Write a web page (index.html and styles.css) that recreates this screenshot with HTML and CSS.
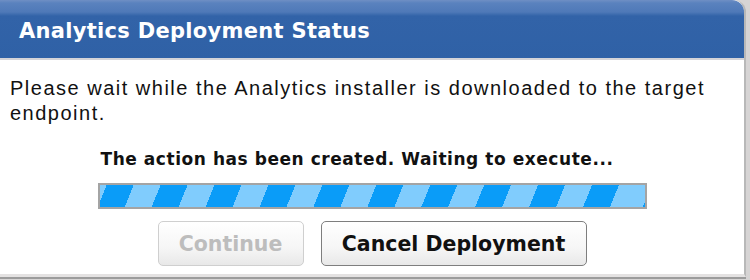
FILE: index.html
```html
<!DOCTYPE html>
<html lang="en">
<head>
    <meta charset="UTF-8">
    <title>Analytics Deployment Status</title>
    <link rel="stylesheet" href="styles.css">
</head>
<body>
    <div class="dialog">
        <div class="dialog-header">
            <h3 class="dialog-title">Analytics Deployment Status</h3>
        </div>
        <div class="dialog-body">
            <p class="message">Please wait while the Analytics installer is downloaded to the target endpoint.</p>
            <div class="status">The action has been created. Waiting to execute...</div>
            <div class="progress"><div class="progress-fill"></div></div>
            <div class="buttons">
                <button class="btn btn-continue" disabled>Continue</button>
                <button class="btn btn-cancel">Cancel Deployment</button>
            </div>
        </div>
    </div>
</body>
</html>
```

FILE: styles.css
```css
html, body {
    margin: 0;
    padding: 0;
}
body {
    background: #d6d4d4;
    width: 750px;
    height: 280px;
    overflow: hidden;
}
.dialog {
    width: 746px;
    height: 277px;
    background: #fff;
    border-right: 2px solid #b8b8b8;
    border-top-right-radius: 12px;
    box-sizing: border-box;
    display: flex;
    flex-direction: column;
    border-bottom: 3px solid #e4e2e2;
    box-shadow: 0 2px 0 #9c9c9c;
}
.dialog-header {
    height: 58px;
    background: linear-gradient(#6f8fc4 0px, #5a82be 3px, #4f79b8 12px, #3263a8 16px, #2f61a6 100%);
    border-top-right-radius: 12px;
    border-bottom: 2px solid #d4d4d8;
    display: flex;
    align-items: center;
    padding-left: 19px;
    flex-shrink: 0;
}
.dialog-title {
    margin: 0;
    padding-top: 4px;
    color: #fff;
    font-family: "DejaVu Sans", Verdana, sans-serif;
    font-weight: bold;
    font-size: 21px;
    letter-spacing: 0.3px;
}
.dialog-body {
    display: flex;
    flex-direction: column;
    align-items: center;
}
.message {
    align-self: stretch;
    margin: 16px 0 0 10px;
    font-family: "Liberation Sans", Arial, sans-serif;
    font-size: 20px;
    line-height: 25px;
    letter-spacing: 1.5px;
    color: #111;
}
.status {
    width: 549px;
    box-sizing: border-box;
    padding-left: 3px;
    margin-top: 23px;
    font-family: "DejaVu Sans", Tahoma, sans-serif;
    font-weight: bold;
    font-size: 17px;
    line-height: 20px;
    letter-spacing: 0.55px;
    color: #111;
    white-space: nowrap;
}
.progress {
    margin-top: 14px;
    width: 549px;
    height: 26px;
    box-sizing: border-box;
    border: 2px solid #a4a4a4;
    background: #fff;
}
.progress-fill {
    height: 100%;
    background: repeating-linear-gradient(-68deg, #80ccfd 0px, #80ccfd 25px, #0a9cf8 25px, #0a9cf8 50px);
    background-position: -8px 0;
}
.buttons {
    display: flex;
    gap: 17px;
    margin-top: 12px;
}
.btn {
    height: 45px;
    padding: 0;
    border-radius: 5px;
    font-family: "DejaVu Sans", Tahoma, sans-serif;
    font-weight: bold;
    font-size: 20.5px;
    background: linear-gradient(#ffffff, #f6f6f6 60%, #e8e8e8);
    cursor: pointer;
}
.btn-continue {
    width: 146px;
    color: #bdbdbd;
    border: 1px solid #cfcfcf;
    cursor: default;
}
.btn-cancel {
    width: 266px;
    color: #111;
    border: 1px solid #7e7e7e;
}
```
